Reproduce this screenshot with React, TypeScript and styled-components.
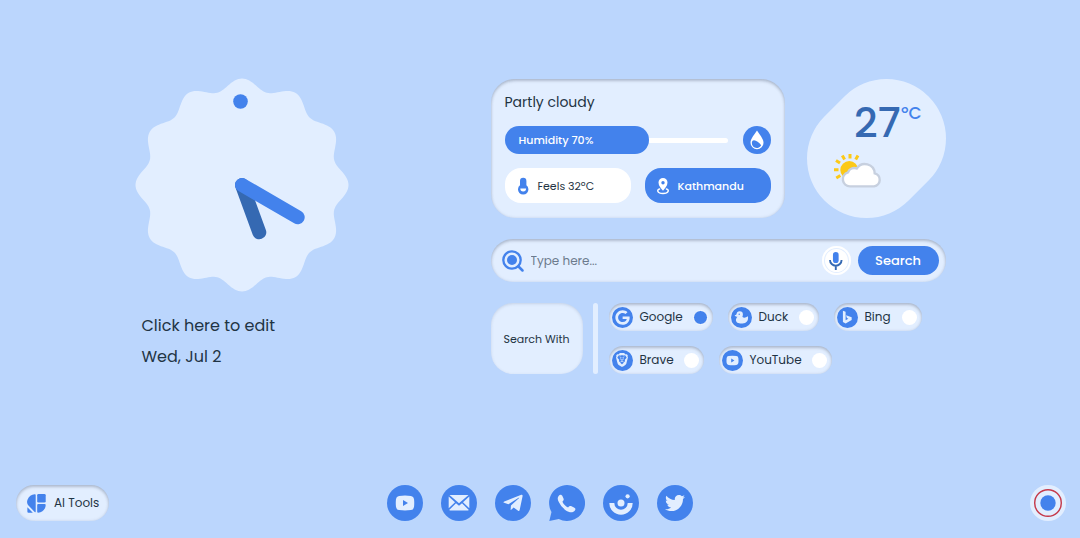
import React, { useState } from "react";
import styled, { createGlobalStyle } from "styled-components";
import { FaGoogle, FaTwitter, FaTelegramPlane } from "react-icons/fa";
import { SiBrave } from "react-icons/si";

const c = {
  page: "#bbd6fd",
  light: "#e2eeff",
  blue: "#4382ec",
  deep: "#3569b2",
  ink: "#1f3444",
  hint: "#6c7b8d",
};

const Global = createGlobalStyle`
  *, *::before, *::after { box-sizing: border-box; }
  body { margin: 0; background: ${c.page}; color: ${c.ink}; font-family: Poppins, Inter, sans-serif; font-size: 12px; line-height: 18px; }
  button, input { font: inherit; color: inherit; border: 0; padding: 0; background: none; }
  button { cursor: pointer; }
  svg { display: block; }
`;

const inset = "inset 0 2px 3px rgba(70, 80, 100, 0.28), inset 0 0 3px rgba(120, 140, 170, 0.25)";

const Page = styled.div`
  min-height: 100vh;
  display: flex;
  flex-direction: column;
  justify-content: space-between;
`;

const Main = styled.main`
  width: 100%;
  max-width: 811px;
  margin: 0 auto;
  padding-top: 78px;
  display: grid;
  grid-template-columns: 356fr 455fr;
`;

const ClockColumn = styled.section`
  display: flex;
  flex-direction: column;
  align-items: flex-start;
`;

const Greeting = styled.div`
  margin: 18px 0 0 7px;
  font-size: 16px;
  line-height: 31px;
  display: flex;
  flex-direction: column;
  align-items: flex-start;
`;

const Widgets = styled.section`
  display: flex;
  flex-direction: column;
  gap: 21px;
`;

const WeatherRow = styled.div`
  display: flex;
  justify-content: space-between;
  padding-top: 1px;
`;

const WeatherCard = styled.div`
  width: 294px;
  padding: 14px;
  border-radius: 24px;
  background: ${c.light};
  box-shadow: ${inset};
  display: flex;
  flex-direction: column;
  gap: 14px;
  font-size: 11px;
`;

const Condition = styled.h2`
  margin: 0;
  font-size: 14px;
  line-height: 19px;
  font-weight: 400;
`;

const HumidityRow = styled.div`
  display: flex;
  align-items: center;
  justify-content: space-between;
`;

const Track = styled.div`
  width: 223px;
  height: 28px;
  display: flex;
  align-items: center;
  &::after {
    content: "";
    flex: 1;
    height: 5px;
    border-radius: 0 3px 3px 0;
    background: #fff;
  }
`;

const Level = styled.div`
  width: 144px;
  line-height: 28px;
  padding-left: 14px;
  border-radius: 14px;
  background: ${c.blue};
  color: #fff;
  font-weight: 500;
`;

const Disc = styled.span<{ $size: number }>`
  width: ${(p) => p.$size}px;
  height: ${(p) => p.$size}px;
  flex: none;
  border-radius: 50%;
  background: ${c.blue};
  color: ${c.light};
  display: grid;
  place-items: center;
`;

const Facts = styled.div`
  display: grid;
  grid-template-columns: 1fr 1fr;
  gap: 14px;
`;

const Fact = styled.div<{ $filled?: boolean }>`
  height: 35px;
  padding-left: 10px;
  display: flex;
  align-items: center;
  gap: 7px;
  border-radius: 16px;
  background: ${(p) => (p.$filled ? c.blue : "#fff")};
  color: ${(p) => (p.$filled ? "#fff" : c.ink)};
  font-weight: ${(p) => (p.$filled ? 500 : 400)};
`;

const SearchForm = styled.form`
  height: 43px;
  padding: 0 7px 0 11px;
  display: flex;
  align-items: center;
  border-radius: 22px;
  background: ${c.light};
  box-shadow: ${inset};
`;

const Query = styled.input`
  flex: 1;
  min-width: 0;
  margin-left: 7px;
  outline: none;
  &::placeholder { color: ${c.hint}; opacity: 1; }
`;

const MicButton = styled.button`
  width: 29px;
  height: 29px;
  margin-right: 7px;
  border-radius: 50%;
  background: #fff;
  box-shadow: inset 0 0 0 2px #fff, inset 0 0 0 3px ${c.light};
  display: grid;
  place-items: center;
`;

const SearchButton = styled.button`
  width: 81px;
  height: 29px;
  border-radius: 15px;
  background: ${c.blue};
  color: #fff;
  font-size: 13px;
  font-weight: 500;
`;

const EngineRow = styled.div`
  display: flex;
`;

const EngineTitle = styled.div`
  width: 92px;
  height: 71px;
  display: grid;
  place-items: center;
  border-radius: 22px;
  background: ${c.light};
  box-shadow: inset 0 1px 3px rgba(90, 110, 140, 0.22);
  font-size: 11px;
`;

const Divider = styled.div`
  width: 5px;
  margin: 0 11px 0 10px;
  border-radius: 3px;
  background: ${c.light};
`;

const Engines = styled.fieldset`
  flex: 1;
  min-width: 0;
  margin: 0;
  padding: 0;
  border: 0;
  display: flex;
  flex-wrap: wrap;
  gap: 15px;
  align-content: space-between;
`;

const Engine = styled.label<{ $width: number }>`
  width: ${(p) => p.$width}px;
  height: 28px;
  padding: 0 5px 0 3px;
  display: flex;
  align-items: center;
  gap: 7px;
  border-radius: 14px;
  background: ${c.light};
  box-shadow: ${inset};
  cursor: pointer;
`;

const Radio = styled.input`
  appearance: none;
  width: 15px;
  height: 15px;
  margin: 0 0 0 auto;
  border-radius: 50%;
  background: #fff;
  &:checked { background: ${c.blue}; border: 1px solid #fff; }
`;

const Footer = styled.footer`
  padding: 16px 14px 17px;
  display: grid;
  grid-template-columns: 1fr auto 1fr;
  align-items: center;
`;

const AiButton = styled.button`
  justify-self: start;
  width: 93px;
  height: 36px;
  margin-left: 2px;
  padding-left: 11px;
  display: flex;
  align-items: center;
  gap: 8px;
  border-radius: 18px;
  background: ${c.light};
  box-shadow: ${inset};
`;

const Shortcuts = styled.nav`
  display: flex;
  gap: 18px;
`;

const MenuButton = styled.button`
  justify-self: end;
  width: 36px;
  height: 36px;
  border-radius: 50%;
  background: ${c.light};
`;

const scallop = (() => {
  const points: string[] = [];
  for (let i = 0; i < 360; i++) {
    const a = (i * Math.PI) / 180;
    const r = 101 + 5.5 * Math.cos(12 * a);
    points.push(`${(107 + r * Math.sin(a)).toFixed(2)},${(107 - r * Math.cos(a)).toFixed(2)}`);
  }
  return points.join(" ");
})();

const Clock = () => (
  <svg width="214" height="214" viewBox="0 0 214 214" role="img" aria-label="Clock">
    <polygon points={scallop} fill={c.light} />
    <circle cx="105.5" cy="23.5" r="7.3" fill={c.blue} />
    <g strokeWidth="14" strokeLinecap="round">
      <path d="M107 107 124.3 154.3" stroke={c.deep} />
      <path d="M107 107 162.7 139.3" stroke={c.blue} />
    </g>
  </svg>
);

const YouTubeGlyph = ({ size }: { size: number }) => (
  <svg width={size} height={size} viewBox="0 0 20 20">
    <path fill="currentColor" fillRule="evenodd" d="M4 3Q10 2.2 16 3Q18.7 3.3 19 6Q19.5 10 19 14Q18.7 16.7 16 17Q10 17.8 4 17Q1.3 16.7 1 14Q.5 10 1 6Q1.3 3.3 4 3ZM8 7v6l5-3Z" />
  </svg>
);

const BingGlyph = () => (
  <svg width="14" height="14" viewBox="0 0 24 24">
    <path fill="currentColor" d="M5 1.2 9.6 2.8V17.6L14.4 14.8 11.9 13.6 10.3 9.2 20 12.6V17.2L9.6 23.2 5 20.6Z" />
  </svg>
);

const DuckGlyph = () => (
  <svg width="15" height="15" viewBox="0 0 15 15">
    <path fill="currentColor" fillRule="evenodd" d="M5.7 1.300A3.200 3.200 0 0 1 8.900 4.500C8.900 5.900 8.100 6.600 8.600 7.100 9.800 8.200 12 7.700 13.900 6.300 14.800 10.500 12.300 13.500 8.500 13.500H6.300C3.300 13.500 1.500 11.500 2 9.300 2.300 8.200 2.900 7.500 3.500 6.800 2.500 6.700 1.200 6.400.6 5.300 1.500 5.200 2.200 4.800 2.500 4.200A3.200 3.200 0 0 1 5.700 1.300ZM5.200 3.500a.7.7 0 1 0 0 1.400.7.7 0 0 0 0-1.400Z" />
  </svg>
);

const Drop = () => (
  <svg width="14" height="20" viewBox="0 0 14 20">
    <path fill="#fff" d="M7 .5C9 4 13.500 8.500 13.500 12.700A6.500 6.500 0 0 1 .5 12.700C.5 8.500 5 4 7 .5Z" />
    <path fill={c.blue} d="M2.300 11C4.500 9 8.500 12 11.200 15.200A4.900 4.900 0 0 1 2.300 11Z" />
  </svg>
);

const Thermometer = () => (
  <svg width="16" height="18" viewBox="0 0 16 18">
    <path fill={c.blue} d="M5 4a3.200 3.200 0 0 1 6.400 0v4.300A5.200 5.200 0 1 1 5 8.300Z" />
    <path fill="#fff" d="M5.300 11.500h5.800a2.900 2.900 0 0 1-5.800 0Z" />
  </svg>
);

const Pin = () => (
  <svg width="16" height="18" viewBox="0 0 16 18">
    <path fill="#fff" fillRule="evenodd" d="M8 1a4.500 4.500 0 0 1 4.500 4.500C12.500 9 9.800 11.500 8 13.700 6.200 11.500 3.500 9 3.500 5.500A4.500 4.500 0 0 1 8 1Zm0 3.100a1.700 1.700 0 1 0 0 3.400 1.700 1.700 0 0 0 0-3.400Z" />
    <path fill="none" stroke="#fff" strokeWidth="1.500" strokeLinecap="round" d="M4.600 12C1.600 12.600 2 16.500 8 16.500S14.400 12.600 11.400 12" />
  </svg>
);

const Temperature = () => (
  <svg width="139" height="139" viewBox="0 0 139 139" role="img" aria-label="27 degrees, partly cloudy">
    <path fill={c.light} d="M37.430 17.430A59 59 0 0 1 121.570 101.570L101.570 121.570A59 59 0 0 1 17.430 37.430Z" />
    <text x="47" y="58" fill={c.deep} fontSize="41" fontWeight="500">27</text>
    <text x="94" y="40" fill={c.blue} fontSize="17" fontWeight="500">ºC</text>
    <g transform="translate(25 75)">
      <circle cx="17.300" cy="16" r="9" fill="#fcc917" />
      <path stroke="#fcc917" strokeWidth="3" d="M18 0v4.500M10.300 1.500l2.300 4M26 1.500l-2.300 4M4 6.500l4 2.500M2 15.800h4.500M4.300 24l4-2.500" />
      <path fill="#fff" stroke="#c7d0df" strokeWidth="2.400" d="M18 32.400a7.200 7.200 0 0 1-2-14.100 6.500 6.500 0 0 1 8.700-3.800 9.800 9.800 0 0 1 18 4.800 6.700 6.700 0 0 1-.6 13.100Z" />
    </g>
  </svg>
);

const Magnifier = () => (
  <svg width="22" height="22" viewBox="0 0 22 22">
    <circle cx="10" cy="10" r="8.700" fill="none" stroke={c.blue} strokeWidth="2.300" />
    <circle cx="10" cy="10" r="5" fill={c.blue} />
    <path d="m16.500 16.500 4 4" stroke={c.blue} strokeWidth="2.500" strokeLinecap="round" />
  </svg>
);

const Mic = () => (
  <svg width="16" height="20" viewBox="0 0 15 19">
    <rect x="4.600" y="1" width="5.400" height="10.500" rx="2.700" fill={c.blue} />
    <path fill="none" stroke={c.deep} strokeWidth="1.800" d="M1.800 8.500a5.500 5.500 0 0 0 11 0M7.300 14v4" />
  </svg>
);

const Mail = () => (
  <svg width="22" height="18" viewBox="0 0 22 18">
    <g fill="currentColor">
      <path d="M1.500 1h19L11 9.300Z" />
      <path d="M.7 2.500 7 8.300.7 14.300Z" />
      <path d="M21.300 2.500 15 8.300l6.300 6Z" />
      <path d="M8 9.200l3 2.500 3-2.500 6.800 6.700-.8.600H2l-.8-.600Z" />
    </g>
  </svg>
);

const Chat = () => (
  <svg width="36" height="36" viewBox="0 0 36 36">
    <path fill={c.blue} d="M18 0a18 18 0 1 1-8.200 34L.3 36 2.500 27A18 18 0 0 1 18 0Z" />
    <path fill={c.light} d="M9.600 10.900C11 9.200 12.700 9.500 13.500 11.300l1.100 2.500c.4 1.100-.1 1.900-1.200 2.900 1 2.500 3.200 4.600 5.700 5.700 1-1.200 1.700-1.800 2.900-1.300l3 1.400c1.800.9 1.800 2.300.5 3.500-2.200 2-5.600 1.300-8.600-.6A19 19 0 0 1 9.800 17C8.500 14.500 8.300 12.500 9.600 10.900Z" />
  </svg>
);

const Smile = () => (
  <svg width="36" height="36" viewBox="0 0 36 36">
    <g fill={c.light}>
      <circle cx="18" cy="18" r="3.500" />
      <circle cx="24.600" cy="11.300" r="2.100" />
      <path d="M6.300 18h5a6.700 6.700 0 0 0 13.400 0h5a11.700 11.700 0 0 1-23.400 0Z" />
    </g>
  </svg>
);

const AiGlyph = () => (
  <svg width="19" height="19" viewBox="0 0 19 19">
    <g fill={c.blue}>
      <path d="M7.700 .2Q8.700 0 8.700 1V17.500Q8.700 18.800 7.700 17.900L1 11Q-.6 8.800.5 5.700C1.700 2.300 4.500.6 7.700.2Z" />
      <path d="M.4 13.200 5.800 18.700H1.400Q.4 18.700.4 17.700Z" />
      <rect x="10.200" y="0" width="8.500" height="8.500" rx="1.300" />
      <path d="M11.200 10h6.500Q18.700 10 18.700 11C18.500 15.200 15.500 18.500 11.200 18.700Q10.200 18.700 10.200 17.700V11Q10.200 10 11.200 10Z" />
    </g>
  </svg>
);

const Target = () => (
  <svg width="36" height="36" viewBox="0 0 36 36">
    <circle cx="18" cy="18" r="13.300" fill="none" stroke="#c5394a" strokeWidth="1.400" />
    <circle cx="18" cy="18" r="7.700" fill={c.blue} />
  </svg>
);

const engines = [
  { name: "Google", width: 104, icon: <FaGoogle size={15} /> },
  { name: "Duck", width: 91, icon: <DuckGlyph /> },
  { name: "Bing", width: 88, icon: <BingGlyph /> },
  { name: "Brave", width: 95, icon: <SiBrave size={14} /> },
  { name: "YouTube", width: 113, icon: <YouTubeGlyph size={13} /> },
];

const shortcuts = [
  { name: "YouTube", icon: <YouTubeGlyph size={20} /> },
  { name: "Mail", icon: <Mail /> },
  { name: "Telegram", icon: <FaTelegramPlane size={22} /> },
  { name: "WhatsApp", icon: <Chat /> },
  { name: "Photos", icon: <Smile /> },
  { name: "Twitter", icon: <FaTwitter size={20} /> },
];

const ShortcutLink = styled.a<{ $bare?: boolean }>`
  width: 36px;
  height: 36px;
  border-radius: 50%;
  background: ${(p) => (p.$bare ? "none" : c.blue)};
  color: ${c.light};
  display: grid;
  place-items: center;
`;

export default function App() {
  const [engine, setEngine] = useState("Google");
  return (
    <Page>
      <Global />
      <Main>
        <ClockColumn>
          <Clock />
          <Greeting>
            <button type="button">Click here to edit</button>
            <span>Wed, Jul 2</span>
          </Greeting>
        </ClockColumn>
        <Widgets>
          <WeatherRow>
            <WeatherCard>
              <Condition>Partly cloudy</Condition>
              <HumidityRow>
                <Track>
                  <Level>Humidity 70%</Level>
                </Track>
                <Disc $size={28}>
                  <Drop />
                </Disc>
              </HumidityRow>
              <Facts>
                <Fact>
                  <Thermometer />
                  Feels 32ºC
                </Fact>
                <Fact $filled>
                  <Pin />
                  Kathmandu
                </Fact>
              </Facts>
            </WeatherCard>
            <Temperature />
          </WeatherRow>
          <SearchForm onSubmit={(e) => e.preventDefault()}>
            <Magnifier />
            <Query type="text" placeholder="Type here..." aria-label="Search query" />
            <MicButton type="button" aria-label="Voice search">
              <Mic />
            </MicButton>
            <SearchButton type="submit">Search</SearchButton>
          </SearchForm>
          <EngineRow>
            <EngineTitle>Search With</EngineTitle>
            <Divider />
            <Engines aria-label="Search engine">
              {engines.map((e) => (
                <Engine key={e.name} $width={e.width}>
                  <Disc $size={21}>{e.icon}</Disc>
                  {e.name}
                  <Radio type="radio" name="engine" checked={engine === e.name} onChange={() => setEngine(e.name)} />
                </Engine>
              ))}
            </Engines>
          </EngineRow>
        </Widgets>
      </Main>
      <Footer>
        <AiButton type="button">
          <AiGlyph />
          AI Tools
        </AiButton>
        <Shortcuts>
          {shortcuts.map((s) => (
            <ShortcutLink key={s.name} href="#" aria-label={s.name} $bare={s.name === "WhatsApp"}>
              {s.icon}
            </ShortcutLink>
          ))}
        </Shortcuts>
        <MenuButton type="button" aria-label="Customize">
          <Target />
        </MenuButton>
      </Footer>
    </Page>
  );
}
